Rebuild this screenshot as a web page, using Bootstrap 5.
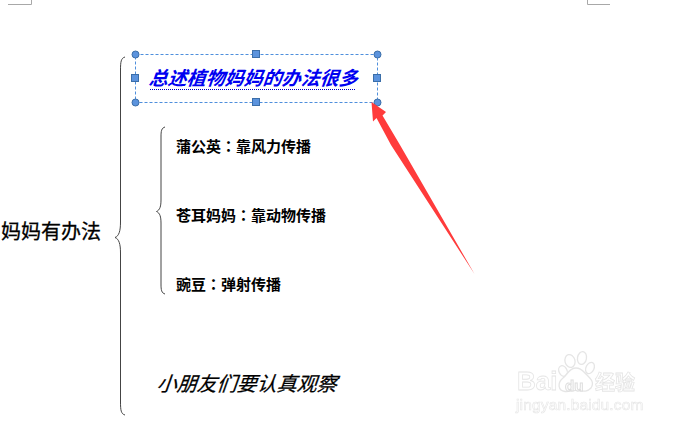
<!DOCTYPE html>
<html lang="zh">
<head>
<meta charset="utf-8">
<link href="https://cdn.jsdelivr.net/npm/bootstrap@5.3.0/dist/css/bootstrap.min.css" rel="stylesheet">
<style>
html,body{margin:0;background:#fff;overflow:hidden}
.slide-canvas{position:relative;width:674px;height:426px;background:#fff;font-family:"Noto Sans CJK SC","Liberation Sans",sans-serif;color:#000}
.slide-art{position:absolute;left:0;top:0}
.lbl{position:absolute;white-space:nowrap;line-height:1.2}
.lbl-root{left:1px;top:219px;font-size:20px;-webkit-text-stroke:.3px #000}
.lbl-item{left:176px;font-size:15px;font-weight:700}
.lbl-a{top:137px}.lbl-b{top:206px}.lbl-c{top:275px}
.colon-tc{font-family:"Noto Sans CJK TC",sans-serif}
.lbl-note{left:157px;top:371px;font-size:20px;font-style:italic;-webkit-text-stroke:.25px #000;transform:skewX(-6deg)}
.lbl-title{left:149px;top:66px;font-size:19px;font-style:italic;font-weight:700;color:#0000f0;transform:skewX(-6deg)}
.title-rule{position:absolute;left:150px;top:89px;width:205px;border-top:1px dotted #0000c0}
.wm-group{position:absolute;left:0;top:0;width:674px;height:426px;filter:blur(.5px);opacity:.55}
.wm{position:absolute;white-space:nowrap;color:#fff;-webkit-text-stroke:.8px #d0d0d0;font-family:"Liberation Sans",sans-serif;font-weight:700;line-height:1}
.wm-bai{left:517px;top:368px;font-size:26px}
.wm-du{left:565px;top:378px;font-size:15px;-webkit-text-stroke:1px #c4c4c4}
.wm-jy{left:595px;top:372px;font-size:20px;font-family:"Noto Sans CJK SC",sans-serif}
.wm-url{left:516px;top:397px;font-size:15.5px;letter-spacing:.15px;font-weight:400;-webkit-text-stroke:.6px #d0d0d0}
</style>
</head>
<body>
<div class="slide-canvas">
<div class="wm-group">
<svg class="slide-art" width="674" height="426" viewBox="0 0 674 426" fill="none">
  <g stroke="#d0d0d0" stroke-width="1.300" fill="#fff">
    <ellipse cx="570" cy="361" rx="5" ry="6.500" transform="rotate(-15 570 361)"/>
    <ellipse cx="582" cy="358" rx="4.500" ry="6.500" transform="rotate(10 582 358)"/>
    <ellipse cx="590" cy="368" rx="4" ry="6" transform="rotate(25 590 368)"/>
    <ellipse cx="563" cy="371" rx="4" ry="5.500" transform="rotate(-25 563 371)"/>
    <path d="M576 368C569 368 568 374 563 378C557 383 558 391 565 391.500C570 392 573 390 577 390.500C582 391 587 392.500 591 388C595 382 590 378 586 374C583 371 581 368 576 368Z"/>
  </g>
</svg>
<div class="wm wm-bai">Bai</div>
<div class="wm wm-du">du</div>
<div class="wm wm-jy">经验</div>
<div class="wm wm-url">jingyan.baidu.com</div>
</div>
<svg class="slide-art" width="674" height="426" viewBox="0 0 674 426" fill="none">
  <path d="M8 4.500H31.500V0M587.500 0V4.500H610" stroke="#a8a8a8" stroke-width="1"/>
  <path d="M125 57C121 58 120.500 62 120.500 70V222C120.500 231 119 236 115 237.500C119 239 120.500 244 120.500 253V402C120.500 410 121 414 125 415" stroke="#444" stroke-width="1"/>
  <path d="M165 127C161.500 128 161 131 161 137V200C161 206 160 210 156.500 211.500C160 213 161 217 161 223V284C161 290 161.500 293 165 294" stroke="#444" stroke-width="1"/>
  <rect x="135.500" y="54.500" width="242" height="48" stroke="#4f8fdc" stroke-width="1" stroke-dasharray="3 2"/>
  <g fill="#5b93dd" stroke="#3b6ea8" stroke-width="1">
    <rect x="252.500" y="50.500" width="7" height="7"/><rect x="252.500" y="98.500" width="7" height="7"/>
    <rect x="131.500" y="74.500" width="7" height="7"/><rect x="373.500" y="74.500" width="7" height="7"/>
    <circle cx="135.500" cy="54.500" r="3.500"/><circle cx="377.500" cy="54.500" r="3.500"/>
    <circle cx="135.500" cy="102.500" r="3.500"/><circle cx="377.500" cy="102.500" r="3.500"/>
  </g>
  <path d="M371.500 102L386 112L382.500 115.500L400 145L474.500 274L391 145L376.500 118L373 121.500Z" fill="#ff3b3b"/>
</svg>
<div class="lbl lbl-title">总述植物妈妈的办法很多</div>
<div class="title-rule"></div>
<div class="lbl lbl-root">妈妈有办法</div>
<div class="lbl lbl-item lbl-a">蒲公英<span class="colon-tc" lang="zh-Hant">：</span>靠风力传播</div>
<div class="lbl lbl-item lbl-b">苍耳妈妈<span class="colon-tc" lang="zh-Hant">：</span>靠动物传播</div>
<div class="lbl lbl-item lbl-c">豌豆<span class="colon-tc" lang="zh-Hant">：</span>弹射传播</div>
<div class="lbl lbl-note">小朋友们要认真观察</div>
</div>
<script src="https://cdn.jsdelivr.net/npm/bootstrap@5.3.0/dist/js/bootstrap.bundle.min.js"></script>
</body>
</html>
